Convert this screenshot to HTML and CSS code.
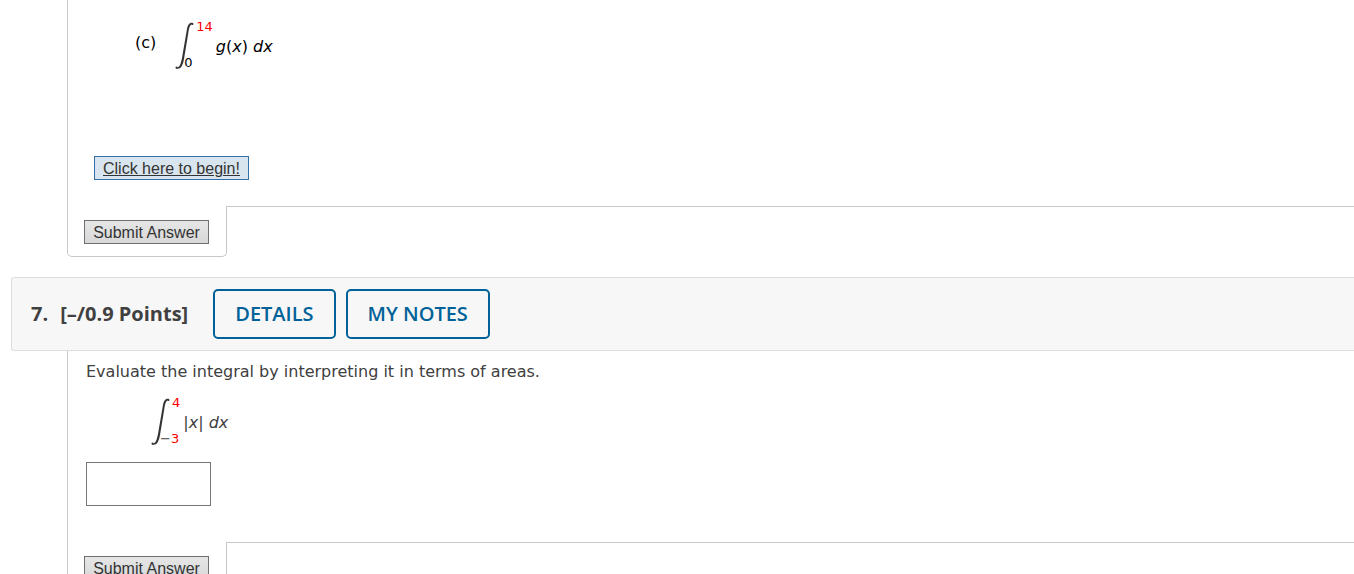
FILE: index.html
```
<!DOCTYPE html>
<html lang="en">
<head>
<meta charset="utf-8">
<title>Assignment</title>
<link rel="stylesheet" href="styles.css">
</head>
<body>
<main class="assignment">
  <section class="question">
    <div class="question-body part-body">
      <div class="part">
        <span class="part-label">(c)</span>
        <div class="integral">
          <svg class="integral-sign" viewBox="0 0 19 48" aria-hidden="true"><path d="M18 1C15 0 12.800 2 11.800 8L7 36C5.500 43 4.500 46 1 45.200L.8 46.500C5.500 47.500 7.500 45 9 37L13.300 11C14.200 4 15.500 1.800 18 2.500Z"/><circle cx="17.500" cy="2" r="1"/><circle cx="1.500" cy="45.500" r="1"/></svg>
          <div class="limits"><span class="value">14</span><span class="lower">0</span></div>
          <span class="integrand"><i>g</i>(<i>x</i>) <i>dx</i></span>
        </div>
      </div>
      <a class="begin" href="#begin">Click here to begin!</a>
    </div>
    <div class="footer"><div class="tab"><button class="submit" type="button">Submit Answer</button></div><div class="rule"></div></div>
  </section>
  <section class="question">
    <header class="question-header">
      <h2 class="title"><span>7.</span><span>[–/0.9 Points]</span></h2>
      <button class="action" type="button">DETAILS</button>
      <button class="action" type="button">MY NOTES</button>
    </header>
    <div class="question-body problem">
      <label class="prompt" for="answer">Evaluate the integral by interpreting it in terms of areas.</label>
      <div class="integral problem-integral">
        <svg class="integral-sign" viewBox="0 0 19 48" aria-hidden="true"><path d="M18 1C15 0 12.800 2 11.800 8L7 36C5.500 43 4.500 46 1 45.200L.8 46.500C5.500 47.500 7.500 45 9 37L13.300 11C14.200 4 15.500 1.800 18 2.500Z"/><circle cx="17.500" cy="2" r="1"/><circle cx="1.500" cy="45.500" r="1"/></svg>
        <div class="limits"><span class="value">4</span><span class="lower">−<span class="value">3</span></span></div>
        <span class="integrand">|<i>x</i>| <i>dx</i></span>
      </div>
      <input class="answer" id="answer" type="text">
    </div>
    <div class="footer"><div class="tab"><button class="submit" type="button">Submit Answer</button></div><div class="rule"></div></div>
  </section>
</main>
</body>
</html>
```
FILE: styles.css
```
* { box-sizing: border-box; }
html { overflow: hidden; }
body {
  margin: 0;
  background: #fff;
  color: #404040;
  font: 16px/20px Verdana, "DejaVu Sans", sans-serif;
}
.assignment { padding-left: 11px; }
.question { margin-bottom: 20px; }
.question-body {
  display: flex;
  flex-direction: column;
  align-items: flex-start;
  margin-left: 56px;
  border-left: 1px solid #c8c8c8;
}
.part-body {
  padding: 22px 26px 26px;
  color: #000;
}
.part {
  display: flex;
  align-items: flex-start;
  gap: 19px;
  margin: 0 0 86px 41px;
}
.part-label { padding-top: 11px; }
.integral {
  display: flex;
  align-items: center;
}
.integral-sign {
  width: 19px;
  height: 48px;
  fill: #333;
}
.limits {
  display: flex;
  flex-direction: column;
  justify-content: space-between;
  align-self: stretch;
  padding: 0 0 2px 2px;
  font-size: 13px;
  line-height: 10px;
}
.lower { margin-left: -12px; }
.value { color: #f00; }
.integrand { padding: 2px 0 0 3px; }
.begin {
  padding: 1px 8px 0;
  border: 1px solid #336fa8;
  background: #d9e5ee;
  color: #333;
  font: 16px/21px "Liberation Sans", Arial, sans-serif;
}
.footer {
  display: flex;
  margin-left: 56px;
}
.tab {
  width: 160px;
  padding: 14px 16px 12px;
  border: 1px solid #c8c8c8;
  border-top: 0;
  border-radius: 0 0 5px 5px;
}
.submit {
  display: block;
  width: 125px;
  height: 24px;
  padding: 1px 0 0;
  border: 1px solid #707070;
  background: linear-gradient(#e6e6e6, #d8d8d8);
  color: #333;
  font: 16px/21px "Liberation Sans", Arial, sans-serif;
}
.rule {
  flex: 1;
  border-top: 1px solid #c8c8c8;
}
.question-header {
  display: flex;
  align-items: center;
  gap: 10px;
  padding: 11px 19px;
  border: 1px solid #dedede;
  border-right: 0;
  border-radius: 3px 0 0 3px;
  background: #f7f7f7;
  font-family: "Open Sans", sans-serif;
}
.title {
  display: flex;
  gap: 12px;
  margin: 0 15px 0 0;
  font-size: 20px;
  line-height: 28px;
  font-weight: 700;
}
.action {
  height: 50px;
  padding: 0 20px;
  border: 2px solid #006298;
  border-radius: 5px;
  background: transparent;
  color: #006298;
  font: 600 20px/28px "Open Sans", sans-serif;
}
.problem { padding: 11px 18px 36px; }
.problem-integral { margin: 16px 0 16px 65px; }
.answer {
  width: 125px;
  height: 44px;
  padding: 0 8px;
  border: 1px solid #767676;
  background: #fff;
  font: inherit;
}
```
